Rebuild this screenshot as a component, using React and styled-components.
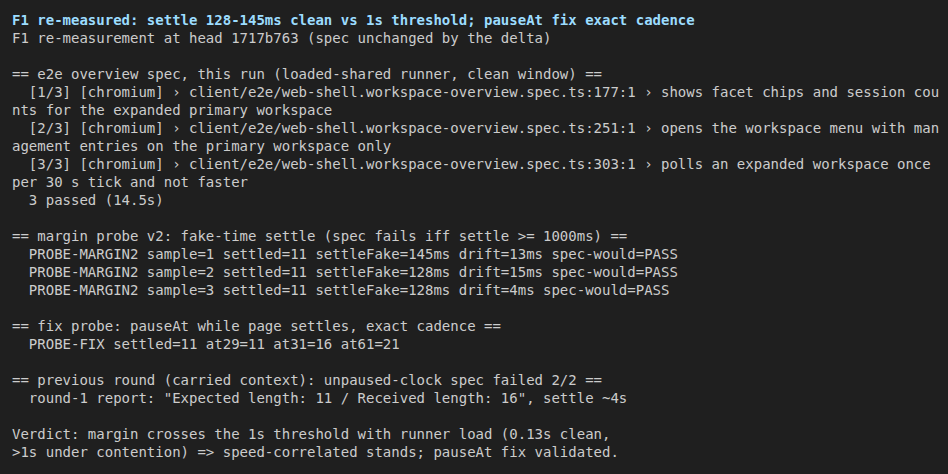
import React from 'react';
import styled, { createGlobalStyle } from 'styled-components';

const GlobalStyle = createGlobalStyle`
  html, body {
    margin: 0;
    padding: 0;
    background: #1f1f1f;
  }
`;

const Terminal = styled.div`
  box-sizing: border-box;
  width: 948px;
  min-height: 474px;
  padding: 11px 12px;
  background: #1f1f1f;
  font-family: "DejaVu Sans Mono", "Liberation Mono", monospace;
  font-size: 14px;
  line-height: 18px;
  color: #cccccc;
`;

const Line = styled.div`
  white-space: pre;
  height: 18px;
  color: ${(p) => (p.$heading ? '#9cdcfe' : '#cccccc')};
  font-weight: ${(p) => (p.$heading ? 700 : 400)};
`;

const lines = [
  { text: 'F1 re-measured: settle 128-145ms clean vs 1s threshold; pauseAt fix exact cadence', heading: true },
  { text: 'F1 re-measurement at head 1717b763 (spec unchanged by the delta)' },
  { text: '' },
  { text: '== e2e overview spec, this run (loaded-shared runner, clean window) ==' },
  { text: '  [1/3] [chromium] › client/e2e/web-shell.workspace-overview.spec.ts:177:1 › shows facet chips and session cou' },
  { text: 'nts for the expanded primary workspace' },
  { text: '  [2/3] [chromium] › client/e2e/web-shell.workspace-overview.spec.ts:251:1 › opens the workspace menu with man' },
  { text: 'agement entries on the primary workspace only' },
  { text: '  [3/3] [chromium] › client/e2e/web-shell.workspace-overview.spec.ts:303:1 › polls an expanded workspace once ' },
  { text: 'per 30 s tick and not faster' },
  { text: '  3 passed (14.5s)' },
  { text: '' },
  { text: '== margin probe v2: fake-time settle (spec fails iff settle >= 1000ms) ==' },
  { text: '  PROBE-MARGIN2 sample=1 settled=11 settleFake=145ms drift=13ms spec-would=PASS' },
  { text: '  PROBE-MARGIN2 sample=2 settled=11 settleFake=128ms drift=15ms spec-would=PASS' },
  { text: '  PROBE-MARGIN2 sample=3 settled=11 settleFake=128ms drift=4ms spec-would=PASS' },
  { text: '' },
  { text: '== fix probe: pauseAt while page settles, exact cadence ==' },
  { text: '  PROBE-FIX settled=11 at29=11 at31=16 at61=21' },
  { text: '' },
  { text: '== previous round (carried context): unpaused-clock spec failed 2/2 ==' },
  { text: '  round-1 report: "Expected length: 11 / Received length: 16", settle ~4s' },
  { text: '' },
  { text: 'Verdict: margin crosses the 1s threshold with runner load (0.13s clean,' },
  { text: '>1s under contention) => speed-correlated stands; pauseAt fix validated.' },
];

const App = () => (
  <>
    <GlobalStyle />
    <Terminal>
      {lines.map((l, i) => (
        <Line key={i} $heading={l.heading}>
          {l.text}
        </Line>
      ))}
    </Terminal>
  </>
);

export default App;
